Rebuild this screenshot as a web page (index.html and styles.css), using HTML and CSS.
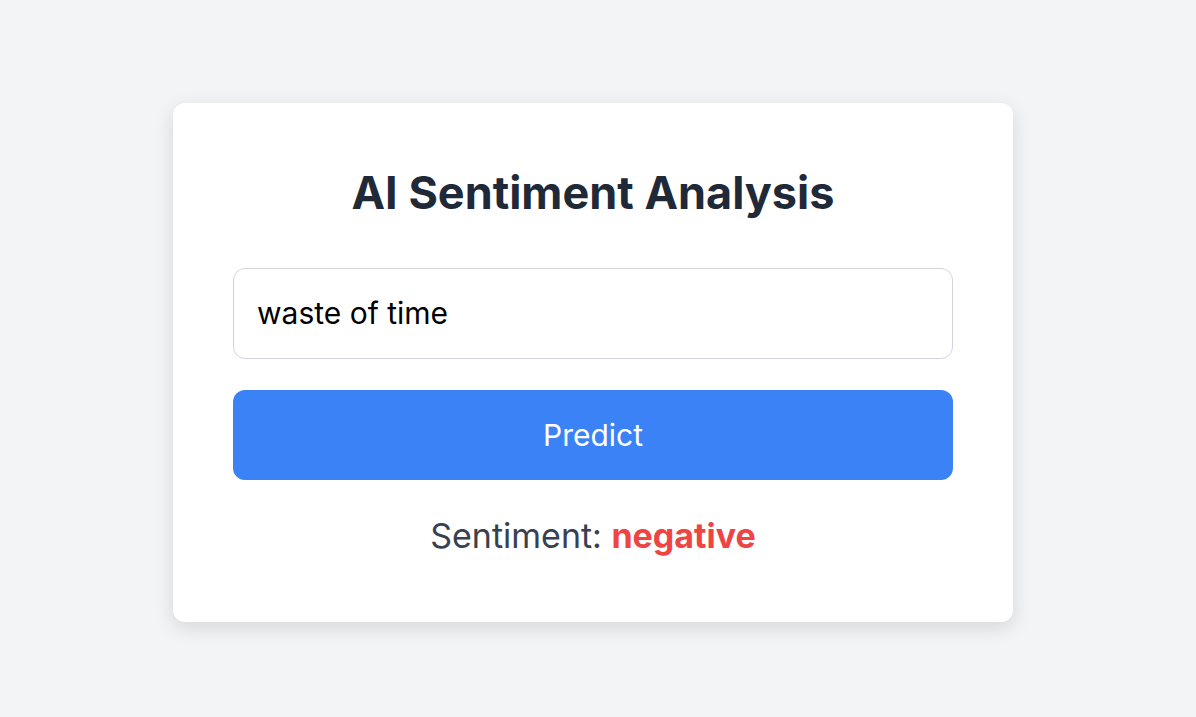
FILE: index.html
```html
<!DOCTYPE html>
<html lang="en">
<head>
<meta charset="utf-8">
<title>AI Sentiment Analysis</title>
<link rel="stylesheet" href="styles.css">
</head>
<body>
<main class="page">
  <section class="card">
    <h1 class="title">AI Sentiment Analysis</h1>
    <input class="text-input" type="text" value="waste of time">
    <button class="predict-btn" type="button">Predict</button>
    <p class="result">Sentiment: <span class="result-value">negative</span></p>
  </section>
</main>
</body>
</html>
```

FILE: styles.css
```css
* { box-sizing: border-box; }
html, body { margin: 0; padding: 0; }
body {
  background: #f3f4f6;
  font-family: Inter, "Noto Sans", sans-serif;
}
.page {
  min-height: 100vh;
  display: flex;
  align-items: center;
  justify-content: center;
  padding: 7px 10px 0 0;
}
.card {
  width: 840px;
  background: #ffffff;
  border-radius: 12px;
  box-shadow: 0 6px 20px rgba(0, 0, 0, 0.12);
  padding: 62px 60px 60px;
  display: flex;
  flex-direction: column;
  text-align: center;
}
.title {
  margin: 0 0 48px;
  font-size: 45px;
  font-weight: 700;
  color: #1f2937;
}
.text-input {
  width: 100%;
  height: 91px;
  padding: 0 23px;
  border: 1px solid #d1d5db;
  border-radius: 12px;
  font-family: inherit;
  font-size: 30px;
  color: #000;
  outline: none;
}
.predict-btn {
  margin-top: 31px;
  height: 90px;
  border: none;
  border-radius: 12px;
  background: #3b82f6;
  color: #ffffff;
  font-family: inherit;
  font-size: 30px;
}
.result {
  margin: 35px 0 6px;
  font-size: 34px;
  color: #374151;
}
.result-value {
  font-weight: 700;
  color: #ef4444;
}
```
